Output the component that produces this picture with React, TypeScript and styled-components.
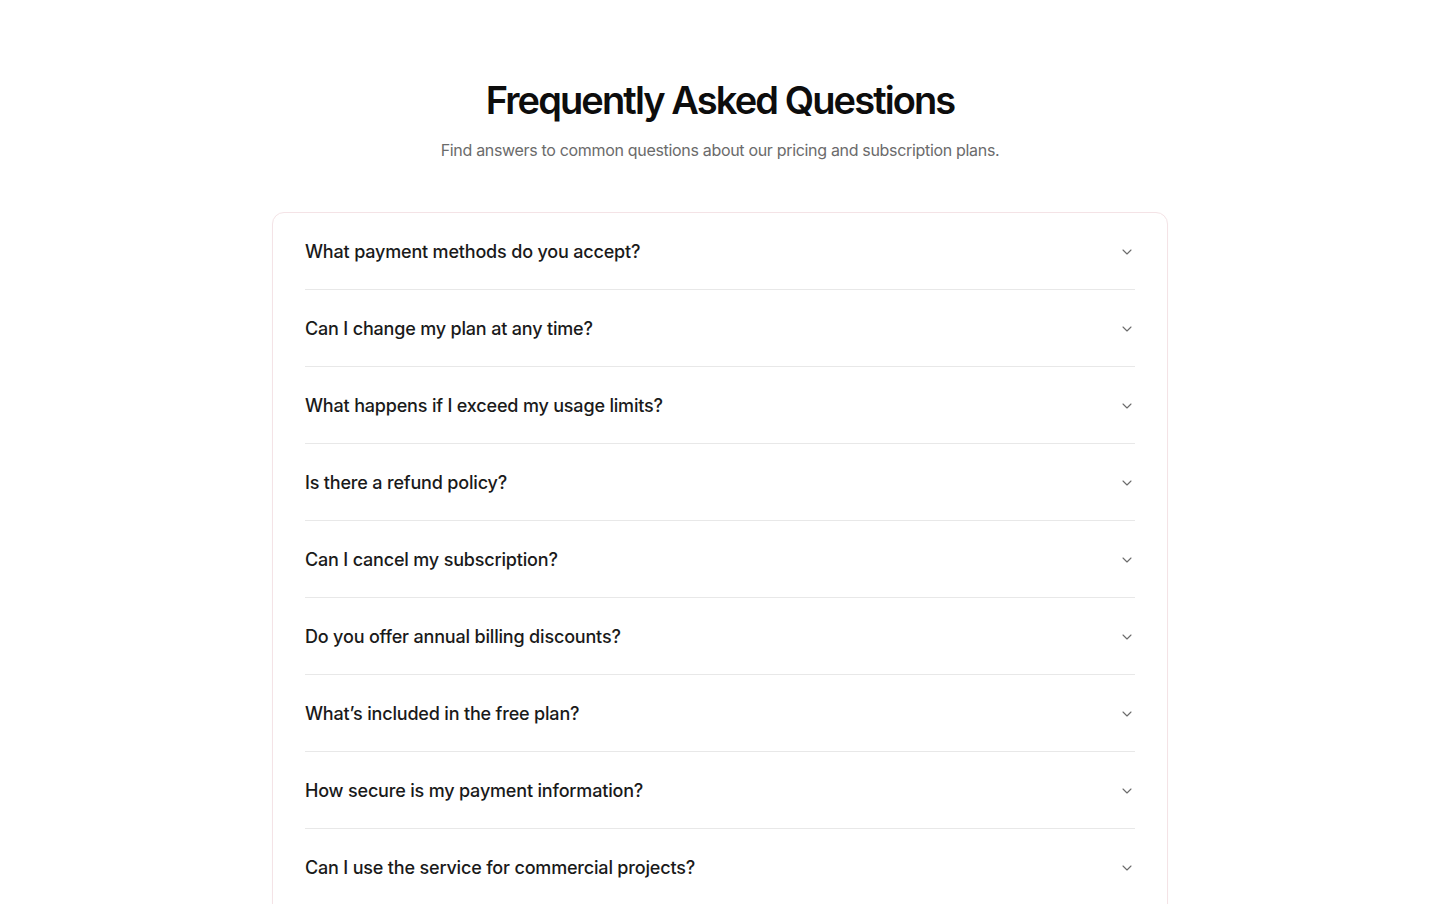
import React from 'react';
import styled, { createGlobalStyle } from 'styled-components';
import { ChevronDown } from 'lucide-react';

const questions = [
  'What payment methods do you accept?',
  'Can I change my plan at any time?',
  'What happens if I exceed my usage limits?',
  'Is there a refund policy?',
  'Can I cancel my subscription?',
  'Do you offer annual billing discounts?',
  'What’s included in the free plan?',
  'How secure is my payment information?',
  'Can I use the service for commercial projects?',
];

const GlobalStyle = createGlobalStyle`
  html, body {
    margin: 0;
    padding: 0;
    background: #ffffff;
    font-family: Inter, "Noto Sans", sans-serif;
  }
`;

export default function App() {
  return (
    <>
      <GlobalStyle />
      <Page>
        <Header>
          <Title>Frequently Asked Questions</Title>
          <Subtitle>Find answers to common questions about our pricing and subscription plans.</Subtitle>
        </Header>
        <Card>
          {questions.map((q, i) => (
            <Item key={q} $last={i === questions.length - 1}>
              <Trigger type="button">
                <Question>{q}</Question>
                <ChevronDown size={16} strokeWidth={1.6} color="#6b6b6b" />
              </Trigger>
            </Item>
          ))}
        </Card>
      </Page>
    </>
  );
}

const Page = styled.main`
  display: flex;
  flex-direction: column;
  align-items: center;
  padding: 76px 0 80px;
`;

const Header = styled.div`
  display: flex;
  flex-direction: column;
  align-items: center;
  gap: 14px;
  margin-bottom: 50px;
`;

const Title = styled.h1`
  margin: 0;
  font-size: 38px;
  line-height: 48px;
  font-weight: 600;
  letter-spacing: -0.05em;
  color: #0d0d0d;
`;

const Subtitle = styled.p`
  margin: 0;
  font-size: 16px;
  line-height: 24px;
  font-weight: 400;
  letter-spacing: -0.02em;
  color: #6b6b6b;
`;

const Card = styled.div`
  width: 830px;
  padding: 0 32px 16px;
  border: 1px solid #f4e3e6;
  border-radius: 12px;
  background: #ffffff;
  box-shadow: 0 1px 2px rgba(0, 0, 0, 0.02);
`;

const Item = styled.div<{ $last: boolean }>`
  border-bottom: ${(p) => (p.$last ? 'none' : '1px solid #e8e8e8')};
`;

const Trigger = styled.button`
  display: flex;
  width: 100%;
  align-items: center;
  justify-content: space-between;
  padding: 27px 0 25px;
  border: none;
  background: none;
  cursor: pointer;
  font-family: inherit;
  text-align: left;
`;

const Question = styled.span`
  font-size: 18px;
  line-height: 24px;
  font-weight: 500;
  letter-spacing: -0.01em;
  color: #1a1a1a;
`;
